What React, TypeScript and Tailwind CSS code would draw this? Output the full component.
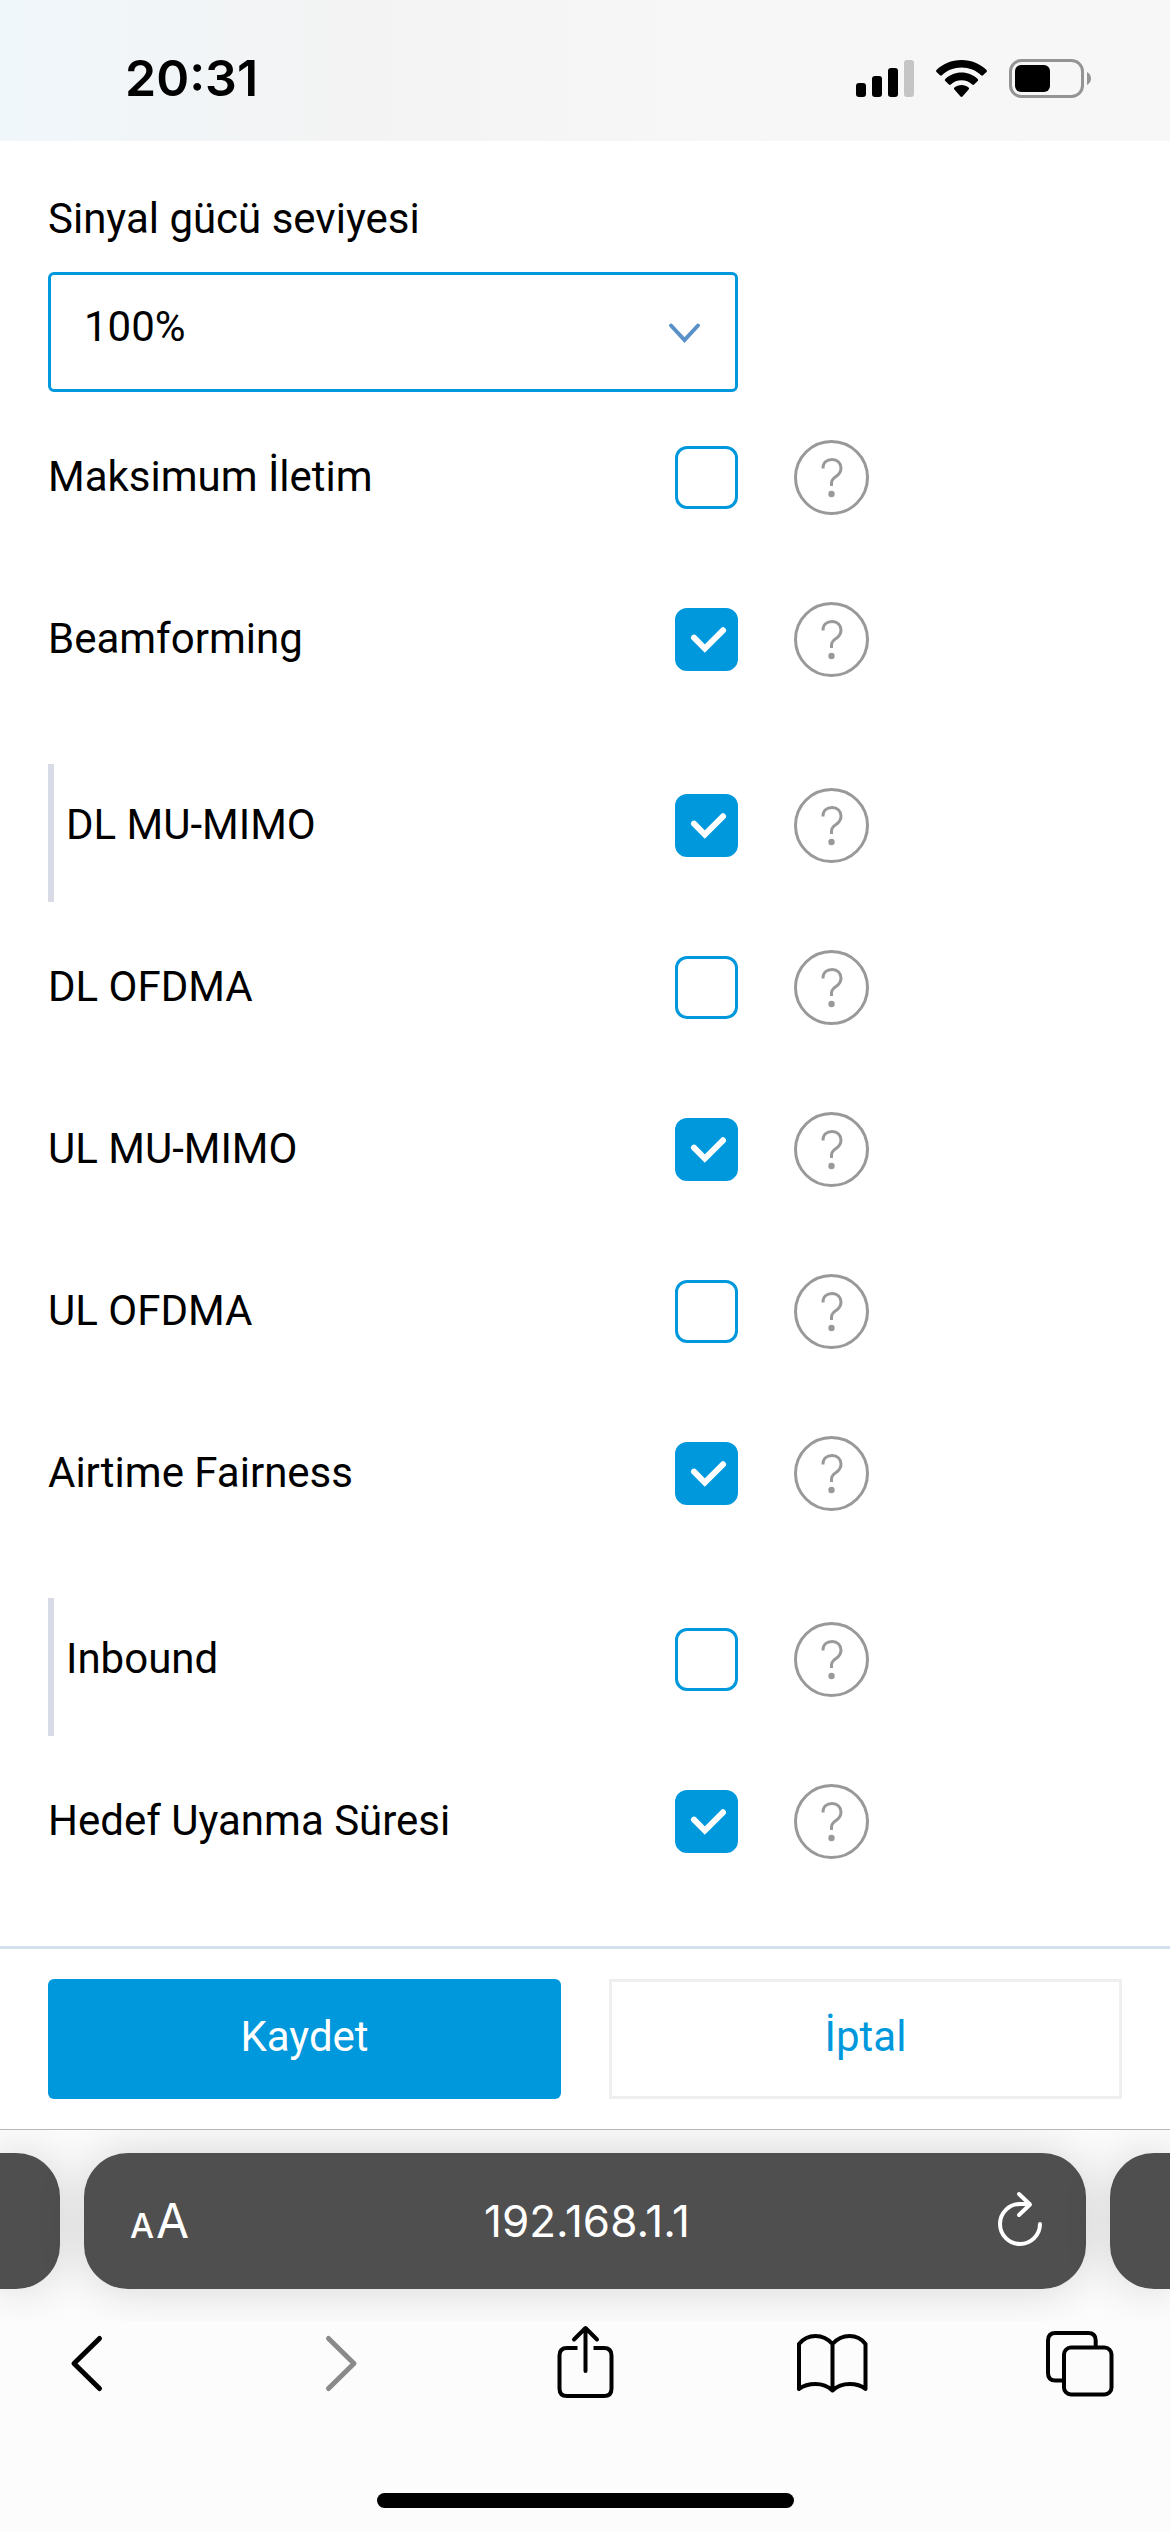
import React from "react";

type Setting = { id: string; label: string; checked: boolean; nested?: boolean };

const settings: Setting[] = [
  { id: "max-transmission", label: "Maksimum İletim", checked: false },
  { id: "beamforming", label: "Beamforming", checked: true },
  { id: "dl-mu-mimo", label: "DL MU-MIMO", checked: true, nested: true },
  { id: "dl-ofdma", label: "DL OFDMA", checked: false },
  { id: "ul-mu-mimo", label: "UL MU-MIMO", checked: true },
  { id: "ul-ofdma", label: "UL OFDMA", checked: false },
  { id: "airtime-fairness", label: "Airtime Fairness", checked: true },
  { id: "inbound", label: "Inbound", checked: false, nested: true },
  { id: "target-wake-time", label: "Hedef Uyanma Süresi", checked: true },
];

function StatusBar() {
  return (
    <header className="flex h-[141px] items-center justify-between bg-linear-to-r from-[#f0f7fb] via-[#f3f3f3] via-30% to-[#f7f7f7] to-60% pt-[15px] pr-[78px] pl-[125px] font-[Inter,sans-serif]">
      <span className="text-[50px] leading-none font-semibold">20:31</span>
      <div className="flex items-center gap-[22px]">
        <svg className="h-[39px] w-[58px]" viewBox="0 0 58 39" aria-label="Sinyal">
          <rect x="0" y="24" width="10" height="14" rx="3" />
          <rect x="16" y="17" width="10" height="21" rx="3" />
          <rect x="32" y="9" width="10" height="29" rx="3" />
          <rect x="48" y="1" width="10" height="37" rx="3" fill="#c5c5c5" />
        </svg>
        <svg className="h-[39px] w-[51px]" viewBox="0 0 51 39" aria-label="Wi-Fi">
          <path d="M25.5 1C35.5 1 44.5 5 50.5 11c.6.6.6 1.300 0 1.900L47 16.300c-.6.6-1.300.6-1.900 0C40 11.400 33 8.600 25.500 8.600S11 11.400 5.900 16.300c-.6.6-1.300.6-1.900 0L.5 12.900c-.6-.6-.6-1.300 0-1.900C6.500 5 15.500 1 25.500 1Z" />
          <path d="M25.500 13.500c6.300 0 12 2.400 16.200 6.500.6.600.6 1.300 0 1.900l-3.600 3.600c-.6.600-1.300.600-1.900 0-2.800-2.700-6.600-4.200-10.700-4.200s-7.900 1.500-10.700 4.200c-.6.600-1.300.600-1.900 0l-3.600-3.600c-.6-.6-.6-1.300 0-1.900 4.200-4.100 9.900-6.500 16.200-6.500Z" />
          <path d="M25.500 26c2.700 0 5.200 1 7.100 2.600.6.500.6 1.300 0 1.900L26.500 37.500c-.6.600-1.400.600-2 0L18.400 30.500c-.6-.6-.6-1.400 0-1.900C20.300 27 22.800 26 25.500 26Z" />
        </svg>
        <svg className="h-[39px] w-[83px]" viewBox="0 0 83 39" aria-label="Pil">
          <rect x="1.500" y="1.500" width="72" height="36" rx="11" fill="none" stroke="#949494" strokeWidth="3" />
          <rect x="6" y="6" width="35" height="27" rx="6" />
          <path d="M78 13c2.600 1.200 4 3.700 4 6.500s-1.400 5.300-4 6.500Z" fill="#949494" />
        </svg>
      </div>
    </header>
  );
}

function SettingRow({ setting }: { setting: Setting }) {
  return (
    <li
      className={
        setting.nested
          ? "mt-12 flex h-[138px] items-center border-l-6 border-[#d8dbe6] pb-4 pl-3"
          : "mt-6 flex h-[138px] items-center pb-4"
      }
    >
      <div className={setting.nested ? "flex w-[672px] items-center justify-between" : "flex w-[690px] items-center justify-between"}>
        <label htmlFor={setting.id}>{setting.label}</label>
        <span className="relative size-[63px]">
          <input
            id={setting.id}
            type="checkbox"
            defaultChecked={setting.checked}
            className="peer block size-full appearance-none rounded-xl border-3 border-[#0098dc] bg-white checked:bg-[#0098dc]"
          />
          <svg
            className="pointer-events-none absolute inset-0 hidden size-full peer-checked:block"
            viewBox="0 0 63 63"
            fill="none"
            stroke="#fff"
            strokeWidth="6"
            strokeLinecap="round"
            aria-hidden="true"
          >
            <path d="M19 29.700 29.800 40.500 48 22.300" />
          </svg>
        </span>
      </div>
      <button type="button" aria-label={setting.label + " hakkında yardım"} className="ml-14 shrink-0">
        <svg className="size-[75px]" viewBox="0 0 75 75" fill="none" stroke="#999" strokeWidth="3">
          <circle cx="37.500" cy="37.500" r="36" />
          <path d="M29 28.500V28c0-5 3.500-8.500 9.200-8.500 5.300 0 8.800 3.800 8.800 8.500 0 4-2 6.500-5 8.500s-4.500 3.500-4.500 6.500v3" />
          <circle cx="37.500" cy="54" r="3.200" fill="#999" stroke="none" />
        </svg>
      </button>
    </li>
  );
}

function BrowserBar() {
  return (
    <div className="border-t border-[#b9b9b9] bg-[#fcfcfc] font-[Inter,sans-serif]">
      <div className="flex gap-6 overflow-hidden pt-[23px] pb-8">
        <div className="h-[136px] w-15 rounded-r-[44px] bg-[#4f4f4f] shadow-[0_0_48px_rgba(0,0,0,0.16)]" />
        <div className="grid h-[136px] flex-1 grid-cols-[1fr_auto_1fr] items-center rounded-[44px] bg-[#4f4f4f] pr-[42px] pl-[46px] text-white shadow-[0_0_48px_rgba(0,0,0,0.16)]">
          <button type="button" aria-label="Sayfa ayarları" className="flex items-baseline gap-0.5 justify-self-start text-[48px] leading-none">
            <span className="text-[34px] font-medium">A</span>
            <span>A</span>
          </button>
          <button type="button" className="text-[44px] leading-none">192.168.1.1</button>
          <button type="button" aria-label="Yenile" className="justify-self-end">
            <svg className="h-15 w-12" viewBox="0 0 48 60" fill="none" stroke="currentColor" strokeWidth="4" strokeLinecap="round" strokeLinejoin="round">
              <path d="M44 33A20 20 0 1 1 24 13h9" />
              <path d="M23 3 34 13.500 23 24" />
            </svg>
          </button>
        </div>
        <div className="h-[136px] w-15 rounded-l-[44px] bg-[#4f4f4f] shadow-[0_0_48px_rgba(0,0,0,0.16)]" />
      </div>
      <nav className="flex justify-between pr-12 pl-[45px]">
        <button type="button" aria-label="Geri">
          <svg className="size-21" viewBox="0 0 84 84" fill="none" stroke="#000" strokeWidth="5" strokeLinecap="round" strokeLinejoin="round">
            <path d="M54.500 17.500 29 42.500l25.500 25" />
          </svg>
        </button>
        <button type="button" aria-label="İleri">
          <svg className="size-21" viewBox="0 0 84 84" fill="none" stroke="#8a8a8a" strokeWidth="5" strokeLinecap="round" strokeLinejoin="round">
            <path d="m35.500 17.500 25.500 25-25.500 25" />
          </svg>
        </button>
        <button type="button" aria-label="Paylaş">
          <svg className="size-21" viewBox="0 0 84 84" fill="none" stroke="#000" strokeWidth="4" strokeLinejoin="round">
            <path d="M35.500 27H25q-7.500 0-7.500 7.500v33Q17.500 75 25 75h37q7.500 0 7.500-7.500v-33Q69.500 27 62 27H51.500" />
            <path d="M43.500 7.500V50M32 18.500l11.500-11.500L55 18.500" strokeLinecap="round" />
          </svg>
        </button>
        <button type="button" aria-label="Yer imleri">
          <svg className="size-21" viewBox="0 0 84 84" fill="none" stroke="#000" strokeWidth="4" strokeLinecap="round" strokeLinejoin="round">
            <path d="M9 23q6.500-8 16.500-8t17 8q7-8 17-8t16 8v45q-6-5-16-5t-17 6.500Q35.500 63 25.500 63T9 68ZM42.500 23v46" />
          </svg>
        </button>
        <button type="button" aria-label="Sekmeler">
          <svg className="size-21" viewBox="0 0 84 84" fill="none" stroke="#000" strokeWidth="4">
            <rect x="26" y="26.500" width="47.500" height="47" rx="7" />
            <path d="M57.700 26v-6.500q0-7.500-7.500-7.500H17.500Q10 12 10 19.500V52q0 7.500 7.500 7.500H26" />
          </svg>
        </button>
      </nav>
      <div className="mx-auto mt-22 mb-6 h-[15px] w-[417px] rounded-full bg-black" />
    </div>
  );
}

export default function App() {
  return (
    <div className="flex min-h-screen flex-col bg-white font-[Roboto,sans-serif] text-[42px] leading-[56px] text-black">
      <StatusBar />
      <form className="flex flex-1 flex-col">
        <main className="px-12 pt-[50px] pb-12">
          <label htmlFor="signal-level" className="block">Sinyal gücü seviyesi</label>
          <div className="relative mt-[25px] w-full max-w-[690px]">
            <select
              id="signal-level"
              defaultValue="100"
              className="block h-30 w-full appearance-none rounded-md border-3 border-[#0098dc] bg-white pb-[11px] pl-[33px]"
            >
              <option value="100">100%</option>
            </select>
            <svg
              className="pointer-events-none absolute top-[50px] right-9 h-6 w-9"
              viewBox="0 0 36 24"
              fill="none"
              stroke="#5990c8"
              strokeWidth="4"
              strokeLinecap="round"
              aria-hidden="true"
            >
              <path d="M5 3.500 18.500 18 32 3.500" />
            </svg>
          </div>
          <ul>
            {settings.map((setting) => (
              <SettingRow key={setting.id} setting={setting} />
            ))}
          </ul>
        </main>
        <div className="mt-auto grid grid-cols-2 gap-12 border-t-3 border-[#d4e0ee] px-12 py-[30px]">
          <button type="submit" className="h-30 rounded-md bg-[#0098dc] pb-1 text-white">Kaydet</button>
          <button type="button" className="h-30 border-3 border-[#eeeff1] bg-white pb-1 text-[#0098dc]">İptal</button>
        </div>
      </form>
      <BrowserBar />
    </div>
  );
}
